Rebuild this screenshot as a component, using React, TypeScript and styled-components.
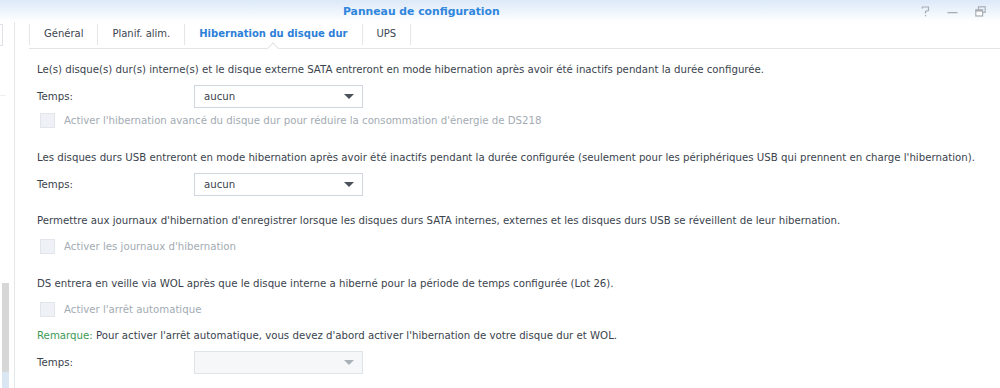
import React from "react";
import styled, { createGlobalStyle } from "styled-components";

const Global = createGlobalStyle`
  html, body { margin: 0; padding: 0; background: #fff; }
  body { width: 1000px; height: 388px; overflow: hidden; font-family: "DejaVu Sans", Verdana, sans-serif; }
  * { box-sizing: border-box; }
`;

const Window = styled.div`
  width: 1000px;
  height: 388px;
  display: flex;
  flex-direction: column;
  overflow: hidden;
  background: #fff;
`;

const TitleBar = styled.div`
  height: 22px;
  flex: none;
  display: flex;
  align-items: center;
  background: linear-gradient(#dce9f9, #ffffff);
`;

const Title = styled.div`
  margin-left: 343px;
  font-size: 10.8px;
  font-weight: bold;
  color: #2f86dd;
`;

const Controls = styled.div`
  margin-left: auto;
  margin-right: 14px;
  display: flex;
  gap: 17px;
  align-items: center;
`;

const Body = styled.div`
  flex: 1;
  display: flex;
  min-height: 0;
`;

const Sidebar = styled.div`
  width: 15px;
  flex: none;
  border-right: 1px solid #e4e7ea;
  display: flex;
  flex-direction: column;
`;

const SideSearch = styled.div`
  margin-top: 2px;
  width: 3px;
  height: 22px;
  border: 1px solid #dfe3e7;
  border-left: none;
`;

const SideRule = styled.div`
  margin-top: 49px;
  width: 6px;
  height: 1px;
  background: #eceff2;
`;

const Scrollbar = styled.div`
  margin-top: auto;
  margin-left: 2px;
  width: 7px;
  height: 105px;
  background: linear-gradient(#d7d7d7 0 85%, #dbe6f3 85% 100%);
`;

const Main = styled.div`
  flex: 1;
  display: flex;
  flex-direction: column;
  padding-left: 14px;
`;

const TabBar = styled.div`
  height: 27px;
  flex: none;
  display: flex;
  align-items: stretch;
  border-bottom: 1px solid #e2e5e8;
  padding-top: 2px;
`;

const Tab = styled.div<{ $active?: boolean }>`
  position: relative;
  display: flex;
  align-items: center;
  padding: 0 14px 2px;
  margin-bottom: 3px;
  font-size: 10px;
  color: ${(p) => (p.$active ? "#2d80d8" : "#3c4650")};
  font-weight: ${(p) => (p.$active ? "bold" : "normal")};
  border-left: 1px solid #e4e7ea;
  &:last-child { border-right: 1px solid #e4e7ea; }
  ${(p) =>
    p.$active &&
    `
    &::after {
      content: "";
      position: absolute;
      left: 50%;
      bottom: -7px;
      width: 7px;
      height: 7px;
      background: #fff;
      border-left: 1px solid #e2e5e8;
      border-top: 1px solid #e2e5e8;
      transform: translateX(-50%) rotate(45deg);
    }
  `}
`;

const Content = styled.div`
  padding: 13px 0 0 8px;
  display: flex;
  flex-direction: column;
  font-size: 10.2px;
  color: #3a434d;
`;

const Section = styled.div`
  display: flex;
  flex-direction: column;
  margin-bottom: 15px;
`;

const Line = styled.div<{ $gapTop?: number }>`
  height: 16px;
  line-height: 16px;
  margin-top: ${(p) => p.$gapTop ?? 0}px;
  margin-bottom: 7px;
  white-space: nowrap;
`;

const Row = styled.div`
  height: 23px;
  display: flex;
  align-items: center;
  margin-bottom: 2px;
`;

const Label = styled.div`
  width: 157px;
`;

const Select = styled.div<{ $disabled?: boolean }>`
  width: 169px;
  height: 23px;
  border: 1px solid ${(p) => (p.$disabled ? "#dfe4e9" : "#cfd6dd")};
  background: ${(p) => (p.$disabled ? "#f5f7f9" : "#fff")};
  display: flex;
  align-items: center;
  padding: 0 8px 0 9px;
  color: #3a434d;
`;

const Arrow = styled.span<{ $disabled?: boolean }>`
  margin-left: auto;
  width: 0;
  height: 0;
  border-left: 5px solid transparent;
  border-right: 5px solid transparent;
  border-top: 5px solid ${(p) => (p.$disabled ? "#a9b1b9" : "#4a535c")};
`;

const CheckRow = styled.div`
  height: 16px;
  display: flex;
  align-items: center;
  margin: 2px 0 7px 3px;
  color: #a3abb3;
  white-space: nowrap;
`;

const Box = styled.span`
  width: 15px;
  height: 15px;
  background: #eef1f5;
  border: 1px solid #e2e6ea;
  margin-right: 9px;
  flex: none;
`;

const Note = styled.span`
  color: #3d9a54;
`;

const SelectField = ({ value, disabled }: { value?: string; disabled?: boolean }) => (
  <Row>
    <Label>Temps:</Label>
    <Select $disabled={disabled}>
      {value}
      <Arrow $disabled={disabled} />
    </Select>
  </Row>
);

const Check = ({ label }: { label: string }) => (
  <CheckRow>
    <Box />
    {label}
  </CheckRow>
);

export default function App() {
  return (
    <>
      <Global />
      <Window>
        <TitleBar>
          <Title>Panneau de configuration</Title>
          <Controls>
            <svg width="9" height="11" viewBox="0 0 9 11">
              <path d="M1 2.5 L1.5 1 L7.5 1 L7.5 4.5 L4.5 5.5 L4.5 7.5" fill="none" stroke="#a9aeb3" strokeWidth="1.2" />
              <rect x="3.9" y="9" width="1.3" height="1.3" fill="#a9aeb3" />
            </svg>
            <svg width="11" height="11" viewBox="0 0 11 11">
              <rect x="0.5" y="6" width="10" height="1.3" fill="#a9aeb3" />
            </svg>
            <svg width="11" height="11" viewBox="0 0 11 11">
              <rect x="3.5" y="0.8" width="6.7" height="5.5" fill="none" stroke="#a9aeb3" strokeWidth="1.2" />
              <rect x="0.8" y="3.8" width="6.8" height="6.2" fill="#fff" stroke="#a9aeb3" strokeWidth="1.2" />
              <rect x="0.8" y="3.8" width="6.8" height="1.8" fill="#a9aeb3" />
            </svg>
          </Controls>
        </TitleBar>
        <Body>
          <Sidebar>
            <SideSearch />
            <SideRule />
            <Scrollbar />
          </Sidebar>
          <Main>
            <TabBar>
              <Tab>Général</Tab>
              <Tab>Planif. alim.</Tab>
              <Tab $active>Hibernation du disque dur</Tab>
              <Tab>UPS</Tab>
            </TabBar>
            <Content>
              <Section>
                <Line>
                  Le(s) disque(s) dur(s) interne(s) et le disque externe SATA entreront en mode hibernation après avoir été inactifs pendant la durée configurée.
                </Line>
                <SelectField value="aucun" />
                <Check label="Activer l'hibernation avancé du disque dur pour réduire la consommation d'énergie de DS218" />
              </Section>
              <Section>
                <Line>
                  Les disques durs USB entreront en mode hibernation après avoir été inactifs pendant la durée configurée (seulement pour les périphériques USB qui prennent en charge l'hibernation).
                </Line>
                <SelectField value="aucun" />
              </Section>
              <Section>
                <Line>
                  Permettre aux journaux d'hibernation d'enregistrer lorsque les disques durs SATA internes, externes et les disques durs USB se réveillent de leur hibernation.
                </Line>
                <Check label="Activer les journaux d'hibernation" />
              </Section>
              <Section>
                <Line>
                  DS entrera en veille via WOL après que le disque interne a hiberné pour la période de temps configurée (Lot 26).
                </Line>
                <Check label="Activer l'arrêt automatique" />
                <Line $gapTop={4}>
                  <Note>Remarque:</Note> Pour activer l'arrêt automatique, vous devez d'abord activer l'hibernation de votre disque dur et WOL.
                </Line>
                <SelectField disabled />
              </Section>
            </Content>
          </Main>
        </Body>
      </Window>
    </>
  );
}
